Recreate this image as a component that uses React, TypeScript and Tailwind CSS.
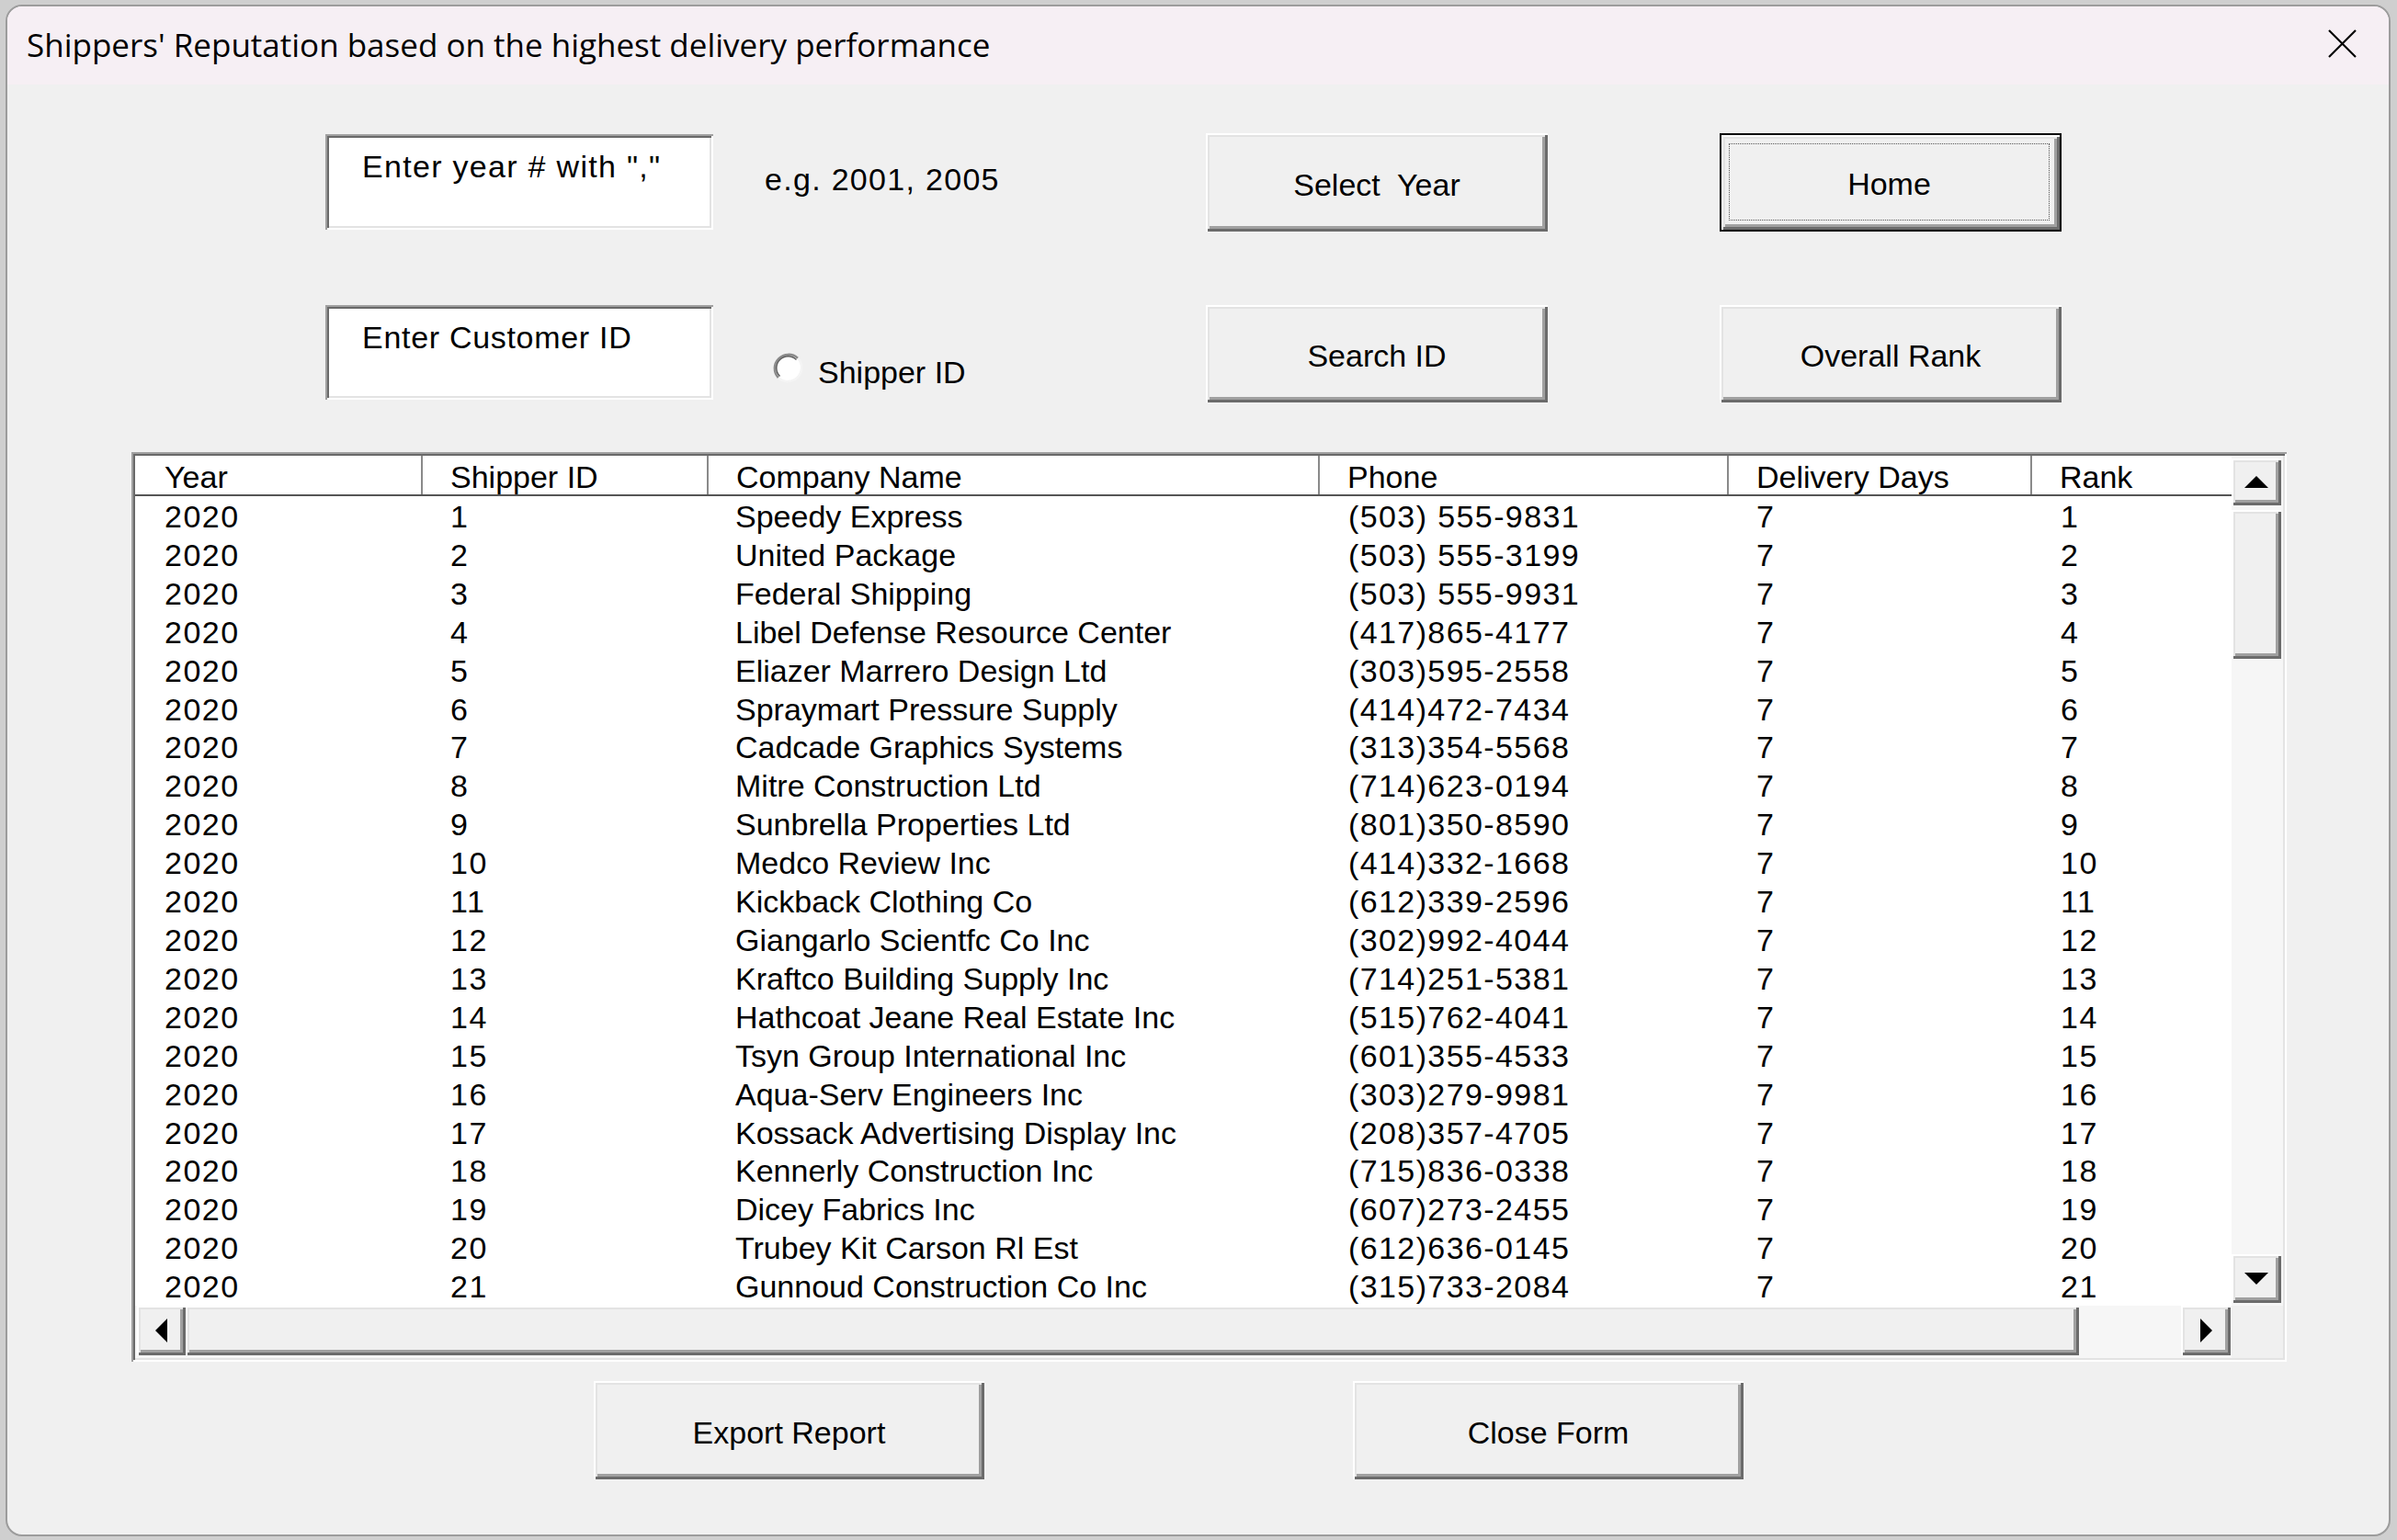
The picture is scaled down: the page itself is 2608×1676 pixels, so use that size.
import React from "react";

const companies: [string, string][] = [
  ["Speedy Express", "(503) 555-9831"],
  ["United Package", "(503) 555-3199"],
  ["Federal Shipping", "(503) 555-9931"],
  ["Libel Defense Resource Center", "(417)865-4177"],
  ["Eliazer Marrero Design Ltd", "(303)595-2558"],
  ["Spraymart Pressure Supply", "(414)472-7434"],
  ["Cadcade Graphics Systems", "(313)354-5568"],
  ["Mitre Construction Ltd", "(714)623-0194"],
  ["Sunbrella Properties Ltd", "(801)350-8590"],
  ["Medco Review Inc", "(414)332-1668"],
  ["Kickback Clothing Co", "(612)339-2596"],
  ["Giangarlo Scientfc Co Inc", "(302)992-4044"],
  ["Kraftco Building Supply Inc", "(714)251-5381"],
  ["Hathcoat Jeane Real Estate Inc", "(515)762-4041"],
  ["Tsyn Group International Inc", "(601)355-4533"],
  ["Aqua-Serv Engineers Inc", "(303)279-9981"],
  ["Kossack Advertising Display Inc", "(208)357-4705"],
  ["Kennerly Construction Inc", "(715)836-0338"],
  ["Dicey Fabrics Inc", "(607)273-2455"],
  ["Trubey Kit Carson Rl Est", "(612)636-0145"],
  ["Gunnoud Construction Co Inc", "(315)733-2084"],
];

const raised =
  "bg-[#f0f0f0] shadow-[inset_2px_2px_0_#ffffff,inset_-3px_-3px_0_#6b6b6b,inset_4px_4px_0_#e3e3e3,inset_-6px_-6px_0_#a0a0a0]";
const sunken =
  "shadow-[inset_2px_2px_0_#a0a0a0,inset_-2px_-2px_0_#ffffff,inset_4px_4px_0_#696969,inset_-4px_-4px_0_#e3e3e3]";

function Btn({ className, children }: { className: string; children: React.ReactNode }) {
  return (
    <div className={`${raised} ${className} flex items-center justify-center pt-[4px] whitespace-pre`}>
      {children}
    </div>
  );
}

const cols = "grid grid-cols-[311px_311px_665px_445px_330px_219px]";

export default function App() {
  return (
    <div className="w-[2608px] h-[1676px] bg-[#cfcfcf] pt-[5px] pl-[6px] pr-[7px] pb-[4px] font-['Liberation_Sans',Arial,sans-serif] text-black overflow-hidden">
      <div className="h-full flex flex-col border-2 border-[#9c9c9c] rounded-[18px] overflow-hidden bg-[#f0f0f0]">
        {/* Title bar */}
        <div className="h-[85px] shrink-0 bg-[#f6eff4] flex justify-between items-start">
          <div className="pt-[24px] pl-[21px] font-['Open_Sans',sans-serif] text-[35px] leading-none">
            Shippers' Reputation based on the highest delivery performance
          </div>
          <svg className="mt-[25px] mr-[35px]" width="31" height="31" viewBox="0 0 31 31">
            <path d="M1 1L30 30M30 1L1 30" stroke="#000" strokeWidth="2.2" fill="none" />
          </svg>
        </div>

        {/* Body */}
        <div className="flex-1 flex flex-col text-[34px] leading-none">
          {/* Row 1 */}
          <div className="mt-[53px] flex items-start">
            <div className={`ml-[346px] mt-[1px] w-[422px] h-[104px] bg-white ${sunken} pt-[18px] pl-[40px] tracking-[1.3px] whitespace-pre`}>
              Enter year # with ","
            </div>
            <div className="ml-[56px] w-[480px] mt-[33px] tracking-[1.3px]">e.g. 2001, 2005</div>
            <Btn className="w-[372px] h-[107px]">Select  Year</Btn>
            <div className="ml-[187px] w-[372px] h-[107px] border-2 border-black bg-[#f0f0f0] shadow-[inset_2px_2px_0_#ffffff,inset_-3px_-3px_0_#6b6b6b,inset_4px_4px_0_#e3e3e3,inset_-6px_-6px_0_#a0a0a0] flex">
              <div className="flex-1 mt-[9px] ml-[8px] mr-[11px] mb-[10px] border border-dotted border-[#555] flex items-center justify-center pt-[4px]">
                Home
              </div>
            </div>
          </div>

          {/* Row 2 */}
          <div className="mt-[80px] flex items-start">
            <div className={`ml-[346px] w-[422px] h-[103px] bg-white ${sunken} pt-[18px] pl-[40px] tracking-[0.7px]`}>
              Enter Customer ID
            </div>
            <div className="ml-[64px] w-[472px] mt-[51px] flex items-start gap-[15px]">
              <svg width="35" height="35" viewBox="0 0 35 35">
                <circle cx="17.5" cy="17.5" r="15" fill="#ffffff" />
                <path d="M6.9 28.1A15 15 0 0 1 28.1 6.9" stroke="#8a8a8a" strokeWidth="2.5" fill="none" />
                <path d="M8.5 26.5A12.7 12.7 0 0 1 26.5 8.5" stroke="#5e5e5e" strokeWidth="1.5" fill="none" />
                <path d="M28.1 6.9A15 15 0 0 1 6.9 28.1" stroke="#f4f4f4" strokeWidth="2.5" fill="none" />
              </svg>
              <span className="mt-[5px]">Shipper ID</span>
            </div>
            <Btn className="w-[372px] h-[106px]">Search ID</Btn>
            <Btn className="ml-[187px] w-[372px] h-[106px]">Overall Rank</Btn>
          </div>

          {/* List box */}
          <div className={`mt-[54px] ml-[135px] w-[2345px] h-[990px] p-[4px] bg-[#f0f0f0] ${sunken}`}>
            <div className="h-full grid grid-cols-[2281px_56px] grid-rows-[925px_57px]">
              {/* Table */}
              <div className="bg-white overflow-hidden flex flex-col">
                <div className={`${cols} h-[44px] shrink-0 border-b-2 border-[#555555]`}>
                  {["Year", "Shipper ID", "Company Name", "Phone", "Delivery Days", "Rank"].map((h, i) => (
                    <div
                      key={h}
                      className={
                        i === 0
                          ? "pl-[32px] pt-[5px] leading-[37px]"
                          : "pl-[30px] pt-[5px] leading-[37px] border-l-2 border-[#8a8a8a]"
                      }
                    >
                      {h}
                    </div>
                  ))}
                </div>
                <div className="pt-[2px]">
                  {companies.map(([name, phone], i) => (
                    <div key={i} className={`${cols} leading-[41.9px] whitespace-nowrap`}>
                      <div className="pl-[32px] tracking-[1.5px]">2020</div>
                      <div className="pl-[32px] tracking-[1.5px]">{i + 1}</div>
                      <div className="pl-[31px]">{name}</div>
                      <div className="pl-[33px] tracking-[1.4px]">{phone}</div>
                      <div className="pl-[32px]">7</div>
                      <div className="pl-[33px] tracking-[1.5px]">{i + 1}</div>
                    </div>
                  ))}
                </div>
              </div>

              {/* Vertical scrollbar */}
              <div className="bg-[#f6f6f6] flex flex-col pt-[3px] pb-[3px]">
                <div className={`${raised} w-[54px] h-[51px] flex items-center justify-center`}>
                  <svg width="26" height="13" viewBox="0 0 26 13">
                    <polygon points="0,13 13,0 26,13" fill="#000" />
                  </svg>
                </div>
                <div className={`${raised} w-[54px] h-[162px] mt-[5px]`} />
                <div className="flex-1" />
                <div className={`${raised} w-[54px] h-[53px] flex items-center justify-center`}>
                  <svg width="26" height="13" viewBox="0 0 26 13">
                    <polygon points="0,0 26,0 13,13" fill="#000" />
                  </svg>
                </div>
              </div>

              {/* Horizontal scrollbar */}
              <div className="bg-[#f6f6f6] flex pl-[2px] pr-[1px] pb-[3px]">
                <div className={`${raised} w-[53px] flex items-center justify-center`}>
                  <svg width="13" height="26" viewBox="0 0 13 26">
                    <polygon points="13,0 13,26 0,13" fill="#000" />
                  </svg>
                </div>
                <div className={`${raised} w-[2060px]`} />
                <div className="flex-1" />
                <div className={`${raised} w-[54px] flex items-center justify-center`}>
                  <svg width="13" height="26" viewBox="0 0 13 26">
                    <polygon points="0,0 13,13 0,26" fill="#000" />
                  </svg>
                </div>
              </div>

              {/* Corner */}
              <div className="bg-[#f0f0f0]" />
            </div>
          </div>

          {/* Bottom buttons */}
          <div className="mt-[21px] flex">
            <Btn className="ml-[638px] w-[425px] h-[107px]">Export Report</Btn>
            <Btn className="ml-[401px] w-[425px] h-[107px]">Close Form</Btn>
          </div>
        </div>
      </div>
    </div>
  );
}
